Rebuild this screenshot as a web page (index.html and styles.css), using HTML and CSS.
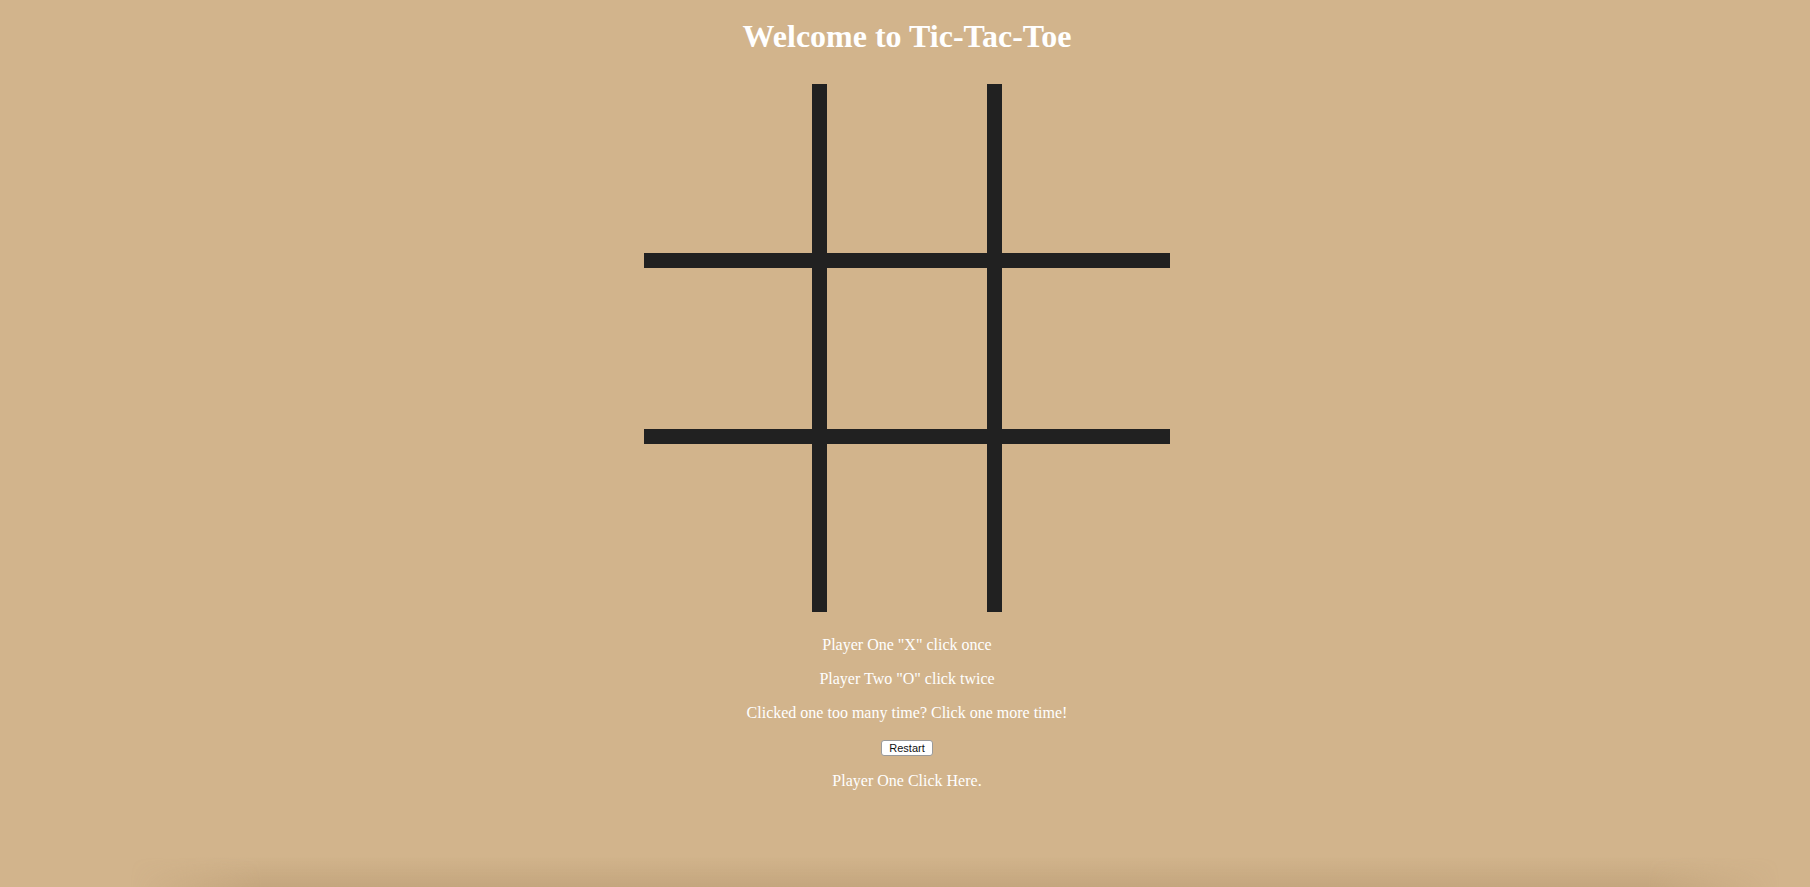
FILE: index.html
```html
<!DOCTYPE html>
<html lang="en">
<head>
<meta charset="utf-8">
<title>Tic-Tac-Toe</title>
<link rel="stylesheet" href="styles.css">
</head>
<body>
<main class="page">
  <h1 class="title">Welcome to Tic-Tac-Toe</h1>
  <div class="board">
    <div class="cell"></div>
    <div class="cell mid-col"></div>
    <div class="cell"></div>
    <div class="cell mid-row"></div>
    <div class="cell mid-row mid-col"></div>
    <div class="cell mid-row"></div>
    <div class="cell"></div>
    <div class="cell mid-col"></div>
    <div class="cell"></div>
  </div>
  <div class="info">
    <p class="line">Player One "X" click once</p>
    <p class="line">Player Two "O" click twice</p>
    <p class="line">Clicked one too many time? Click one more time!</p>
    <p class="line"><button class="restart" type="button">Restart</button></p>
    <p class="line">Player One Click Here.</p>
  </div>
</main>
<div class="shade"></div>
</body>
</html>
```
FILE: styles.css
```css
html, body {
  margin: 0;
  padding: 0;
  background: #d2b48c;
  height: 100%;
  overflow: hidden;
}
body {
  font-family: "Liberation Serif", "Times New Roman", serif;
  color: #ffffff;
}
.page {
  display: flex;
  flex-direction: column;
  align-items: center;
  padding-left: 4px;
  padding-top: 1px;
}
.title {
  font-size: 32px;
  font-weight: bold;
  margin: 17px 0 29px;
  line-height: 37px;
}
.board {
  display: grid;
  grid-template-columns: 168px 190px 168px;
  grid-template-rows: 169px 191px 168px;
}
.cell {
  box-sizing: border-box;
}
.mid-col {
  border-left: 15px solid #212121;
  border-right: 15px solid #212121;
}
.mid-row {
  border-top: 15px solid #212121;
  border-bottom: 15px solid #212121;
}
.info {
  display: flex;
  flex-direction: column;
  align-items: center;
  margin-top: 8px;
}
.line {
  font-size: 16px;
  line-height: 18px;
  margin: 16px 0 0;
}
.restart {
  font-family: "Liberation Sans", Arial, sans-serif;
  font-size: 11px;
  line-height: 12px;
  padding: 1px 6px;
  background: #ffffff;
  color: #111111;
  border: 1px solid #9a9a9a;
  border-radius: 3px;
  width: 52px;
  height: 16px;
  vertical-align: middle;
}
.shade {
  position: fixed;
  left: 130px;
  right: 30px;
  bottom: 0;
  height: 30px;
  background: linear-gradient(to top, rgba(160,130,90,0.28), rgba(160,130,90,0));
  -webkit-mask-image: linear-gradient(to right, transparent, #000 8%, #000 92%, transparent);
  mask-image: linear-gradient(to right, transparent, #000 8%, #000 92%, transparent);
  pointer-events: none;
}
```
